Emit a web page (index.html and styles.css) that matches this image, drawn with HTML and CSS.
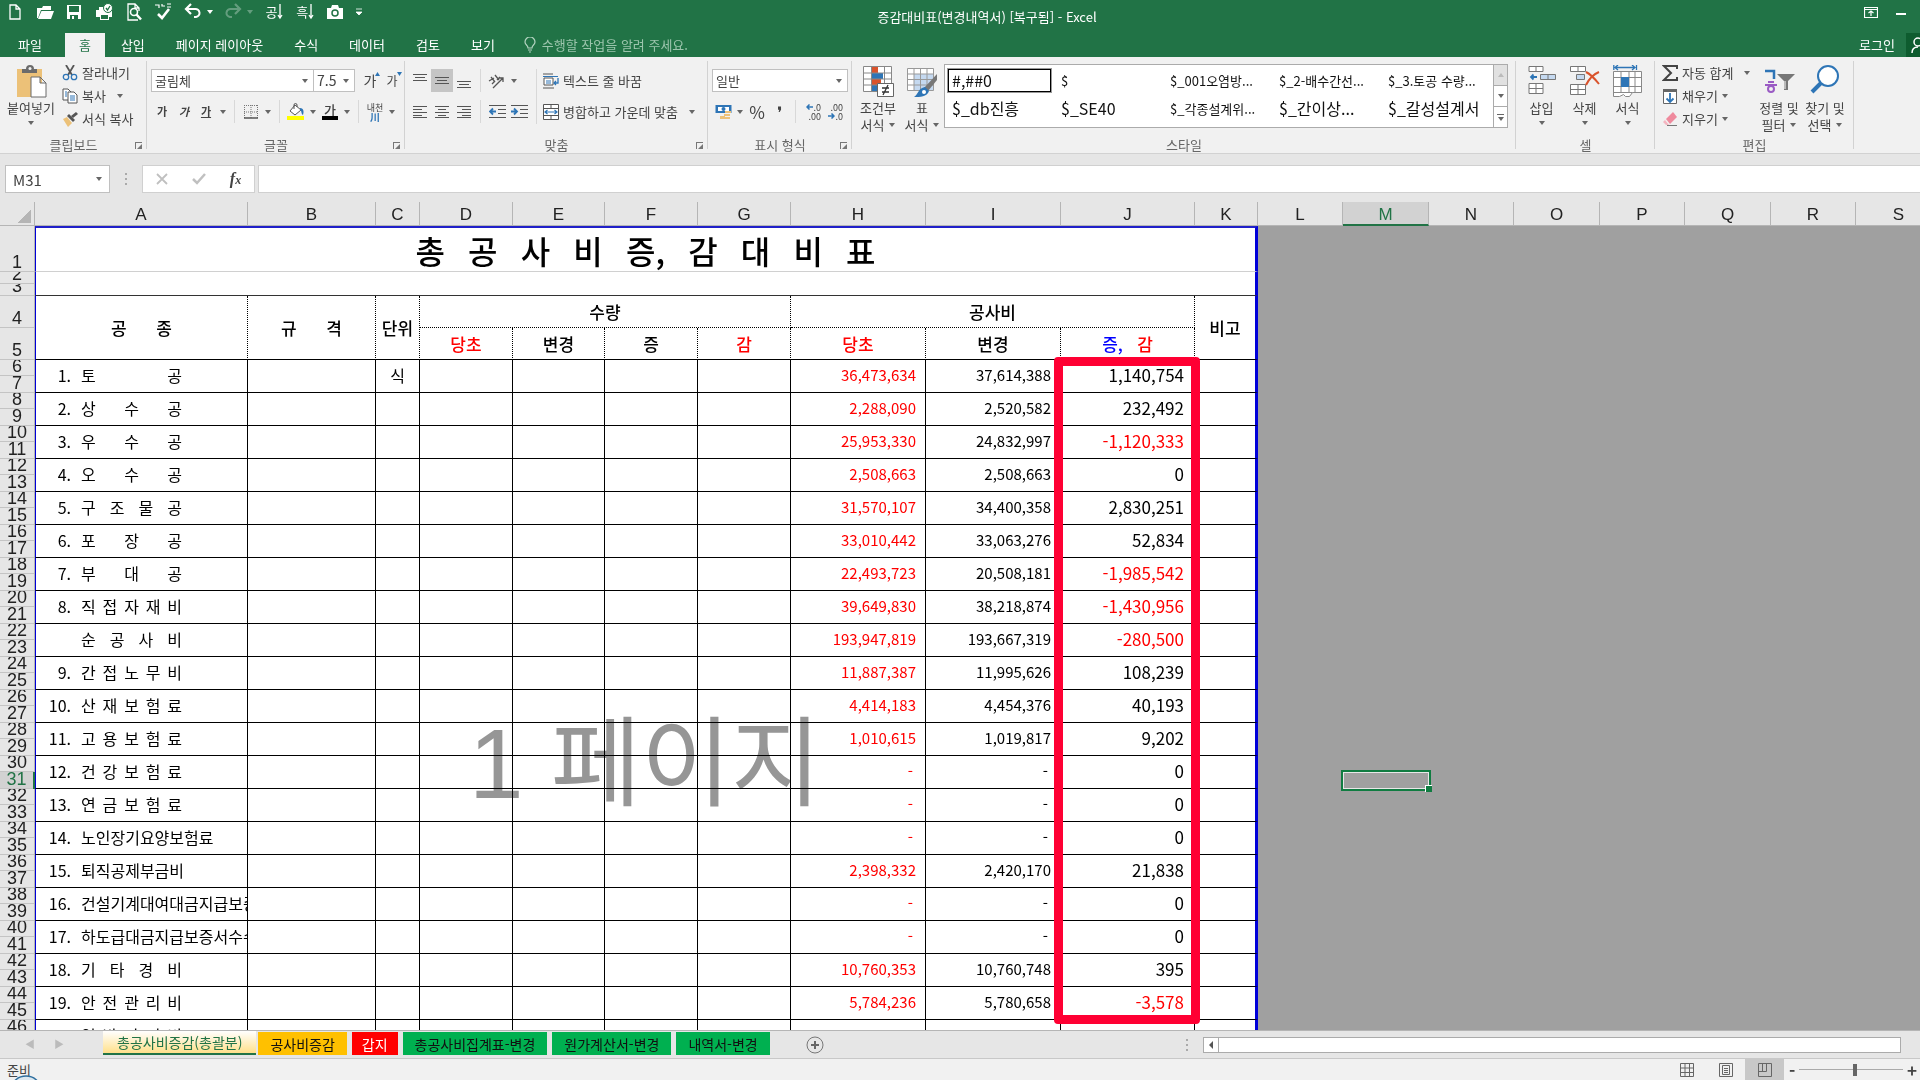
FILE: index.html
```html
<!DOCTYPE html>
<html lang="ko">
<head>
  <meta charset="UTF-8">
  <title>증감대비표(변경내역서) [복구됨] - Excel</title>
  <link rel="stylesheet" href="styles.css">
</head>
<body>

  <header class="titlebar">
    <div class="quick">
      <button aria-label="새로 만들기"><svg width="18" height="18" viewBox="0 0 18 18"><path d="M4 2h6l4 4v10H4zM10 2v4h4" fill="none" stroke="#fff" stroke-width="1.3"/></svg></button>
      <button aria-label="열기"><svg width="18" height="18" viewBox="0 0 18 18"><path d="M1 15V5h5l1-2h8v4H5l-3 8zM5.500 8H18l-3 8H2z" fill="#fff"/></svg></button>
      <button aria-label="저장"><svg width="18" height="18" viewBox="0 0 18 18"><path d="M2 2h14v14H2zM4 3v6h10V3zM5 12v4h2v-3h2v3h4v-4z" fill="#fff" fill-rule="evenodd"/></svg></button>
      <button aria-label="빠른 인쇄"><svg width="18" height="18" viewBox="0 0 18 18"><path d="M1 7h3V4h5v3h8v7h-3v3H5v-3H1zM6 12v4h7v-4z" fill="#fff" fill-rule="evenodd"/><circle cx="13" cy="5" r="4.500" fill="#fff" stroke="#217346"/><path d="M11 5l1.500 2L15 3" fill="none" stroke="#217346" stroke-width="1.300"/></svg></button>
      <button aria-label="인쇄 미리 보기"><svg width="18" height="18" viewBox="0 0 18 18"><path d="M13 17H3V1h7l4 4v3M10 1v4h4" fill="none" stroke="#fff" stroke-width="1.300"/><circle cx="9" cy="9" r="3.500" fill="none" stroke="#fff" stroke-width="1.600"/><path d="M11.500 11.500l4.500 5" stroke="#fff" stroke-width="2.500"/></svg></button>
      <button aria-label="맞춤법 검사"><svg width="18" height="18" viewBox="0 0 18 18"><path d="M4 11l4 4 7-9" fill="none" stroke="#fff" stroke-width="2.600"/><path d="M1 2h4v3M8 1v2h3M13 1h4M13 4h4" fill="none" stroke="#fff" stroke-width="1.200"/></svg></button>
      <button class="wide" aria-label="실행 취소"><svg width="18" height="18" viewBox="0 0 18 18"><path d="M3 6h8a4 4 0 0 1 1 8h-2" fill="none" stroke="#fff" stroke-width="2"/><path d="M7 1L2 6l5 5" fill="none" stroke="#fff" stroke-width="2.200"/></svg><i class="caret"></i></button>
      <button class="wide faded" aria-label="다시 실행"><svg width="18" height="18" viewBox="0 0 18 18"><path d="M15 6H7a4 4 0 0 0-1 8h2" fill="none" stroke="#fff" stroke-width="2"/><path d="M11 1l5 5-5 5" fill="none" stroke="#fff" stroke-width="2.200"/></svg><i class="caret"></i></button>
      <button class="sort">공<svg width="6" height="16" viewBox="0 0 6 16"><path d="M3 0v14M1 11l2 3 2-3" fill="none" stroke="#fff" stroke-width="1.300"/></svg></button>
      <button class="sort">흑<svg width="6" height="16" viewBox="0 0 6 16"><path d="M3 0v14M1 11l2 3 2-3" fill="none" stroke="#fff" stroke-width="1.300"/></svg></button>
      <button aria-label="카메라"><svg width="18" height="18" viewBox="0 0 18 18"><path d="M1 5h4l1-3h6l1 3h4v11H1z" fill="#fff"/><circle cx="9" cy="10" r="3" fill="none" stroke="#217346" stroke-width="1.500"/></svg></button>
      <button class="more" aria-label="빠른 실행 도구 모음 사용자 지정"><svg width="8" height="8" viewBox="0 0 8 8"><path d="M1 1h6M1 4h6L4 7z" fill="#fff" stroke="#fff" stroke-width="0.800"/></svg></button>
    </div>
    <h1 class="doc-title">증감대비표(변경내역서) [복구됨] - Excel</h1>
    <div class="window-buttons">
      <button aria-label="리본 메뉴 표시 옵션"><svg width="14" height="11" viewBox="0 0 14 11"><path d="M.5.5h13v10H.5zM.5 2.500h13M7 9V4M4.500 6L7 4l2.500 2" fill="none" stroke="#fff" stroke-width="1.200"/></svg></button>
      <button aria-label="최소화"><svg width="10" height="11" viewBox="0 0 10 11"><path d="M0 7h10" stroke="#fff" stroke-width="2"/></svg></button>
    </div>
  </header>

  <nav class="menu">
    <a class="file" href="#file">파일</a>
    <a class="on" href="#home">홈</a>
    <a href="#insert">삽입</a>
    <a href="#layout">페이지 레이아웃</a>
    <a href="#formula">수식</a>
    <a href="#data">데이터</a>
    <a href="#review">검토</a>
    <a href="#view">보기</a>
    <button class="tell-me"><svg width="12" height="16" viewBox="0 0 12 16"><path d="M4 11c0-3-3-3-3-6a5 5 0 0 1 10 0c0 3-3 3-3 6zM4 13h4M5 15h2" fill="none" stroke="#b4d4c1" stroke-width="1.200"/></svg>수행할 작업을 알려 주세요.</button>
    <button class="login">로그인</button>
    <button class="share" aria-label="공유"><svg width="14" height="18" viewBox="0 0 14 18"><circle cx="12" cy="6" r="4" fill="none" stroke="#fff" stroke-width="1.500"/><path d="M6 17c0-4 2-6 6-6" fill="none" stroke="#fff" stroke-width="1.500"/></svg></button>
  </nav>

  <section class="ribbon">
    <div class="group clipboard">
      <div class="group-body">
        <button class="big">
          <svg width="32" height="34" viewBox="0 0 32 34"><path d="M2 4h25v28H2z" fill="#ecc178"/><path d="M7 8V4h4a4 4 0 0 1 8 0h3v4z" fill="#6b6b6b"/><circle cx="15" cy="3.500" r="1.500" fill="#f1f1f1"/><path d="M16 12h9l6 6v14H16zM25 12v6h6" fill="#fff" stroke="#6b6b6b"/></svg>
          붙여넣기<i class="caret"></i>
        </button>
        <div class="stack">
          <button class="small"><svg width="16" height="16" viewBox="0 0 16 16"><path d="M4 0l6 10M12 0L6 10" stroke="#555" stroke-width="1.800"/><circle cx="4" cy="12" r="2.700" fill="none" stroke="#2e75b6" stroke-width="1.300"/><circle cx="12" cy="12" r="2.700" fill="none" stroke="#2e75b6" stroke-width="1.300"/></svg>잘라내기</button>
          <button class="small"><svg width="16" height="16" viewBox="0 0 16 16"><path d="M1 1h5l3 3v8H1z" fill="#fff" stroke="#555"/><path d="M6 4h6l3 3v8H6z" fill="#fff" stroke="#555"/><path d="M8 8h5M8 10h5M8 12h5M3 4h2M3 6h2M3 8h2" stroke="#2e75b6"/></svg>복사<i class="caret far"></i></button>
          <button class="small"><svg width="16" height="16" viewBox="0 0 16 16"><path d="M1 8l4-2 5 6-4 4z" fill="#ecc178"/><path d="M5 5l2-2 6 6-2 2z" fill="#555"/><path d="M9 5l5-4 2 2-5 4z" fill="#555"/></svg>서식 복사</button>
        </div>
      </div>
      <div class="group-name">클립보드<span class="launch"></span></div>
    </div>

    <div class="group font">
      <div class="group-body rows">
        <div class="row">
          <span class="pick wide-pick"><select aria-label="글꼴"><option>굴림체</option></select></span>
          <span class="pick size-pick"><select aria-label="글꼴 크기"><option>7.5</option></select></span>
          <button class="tool grow">가<svg width="5" height="4" viewBox="0 0 5 4"><path d="M0 4l2.500-4L5 4z" fill="#2e75b6"/></svg></button>
          <button class="tool shrink">가<svg width="5" height="4" viewBox="0 0 5 4"><path d="M0 0l2.500 4L5 0z" fill="#2e75b6"/></svg></button>
        </div>
        <div class="row tools">
          <button class="tool bold">가</button>
          <button class="tool italic">가</button>
          <button class="tool under">가</button>
          <button class="drop" aria-label="밑줄 옵션"><i class="caret"></i></button>
          <span class="bar"></span>
          <button class="tool" aria-label="테두리"><svg width="14" height="14" viewBox="0 0 14 14"><path d="M.5 0v13M13.500 0v13M7 0v13M0 .5h14M0 7h14" stroke="#777" stroke-dasharray="1 1"/><path d="M0 13h14" stroke="#555" stroke-width="1.500"/></svg></button>
          <button class="drop" aria-label="테두리 옵션"><i class="caret"></i></button>
          <span class="bar"></span>
          <button class="tool" aria-label="채우기 색"><svg width="18" height="17" viewBox="0 0 18 17"><path d="M8 2l6 5-6 5-5-4z" fill="#fff" stroke="#555"/><path d="M7 6V2a1.500 1.500 0 0 1 3 0v2" fill="none" stroke="#555"/><path d="M13 5c4 0 4 4 3 7-2-1-1-4-3-5z" fill="#2e75b6"/><path d="M0 13h17v4H0z" fill="#ff0"/></svg></button>
          <button class="drop" aria-label="채우기 색 옵션"><i class="caret"></i></button>
          <button class="tool color">가</button>
          <button class="drop" aria-label="글꼴 색 옵션"><i class="caret"></i></button>
          <span class="bar"></span>
          <button class="tool ruby">내천<b>川</b></button>
          <button class="drop" aria-label="윗주 옵션"><i class="caret"></i></button>
        </div>
      </div>
      <div class="group-name">글꼴<span class="launch"></span></div>
    </div>

    <div class="group align">
      <div class="group-body">
        <div class="rows">
          <div class="row tools">
            <button class="tool" aria-label="위쪽 맞춤"><svg width="14" height="16" viewBox="0 0 14 16"><path d="M0 1.500h14M2 4.500h10M0 7.500h14" stroke="#555"/></svg></button>
            <button class="tool on" aria-label="가운데 맞춤"><svg width="14" height="16" viewBox="0 0 14 16"><path d="M0 4.500h14M2 7.500h10M0 10.500h14" stroke="#555"/></svg></button>
            <button class="tool" aria-label="아래쪽 맞춤"><svg width="14" height="16" viewBox="0 0 14 16"><path d="M0 8.500h14M2 11.500h10M0 14.500h14" stroke="#555"/></svg></button>
            <span class="bar"></span>
            <button class="tool" aria-label="방향"><svg width="18" height="16" viewBox="0 0 18 16"><path d="M5 15L15 5M15 9V5h-4M1 8l5-3M3 4l4 5M7 2l4 5M9 7l3-3M4 11l3-3" fill="none" stroke="#555" stroke-width="1.300"/></svg></button>
            <button class="drop" aria-label="방향 옵션"><i class="caret"></i></button>
          </div>
          <div class="row tools">
            <button class="tool" aria-label="왼쪽 맞춤"><svg width="14" height="12" viewBox="0 0 14 12"><path d="M0 .5h14M0 3.500h9M0 6.500h14M0 9.500h9M0 11.500h14" stroke="#555"/></svg></button>
            <button class="tool" aria-label="가로 가운데 맞춤"><svg width="14" height="12" viewBox="0 0 14 12"><path d="M0 .5h14M3 3.500h8M0 6.500h14M3 9.500h8M0 11.500h14" stroke="#555"/></svg></button>
            <button class="tool" aria-label="오른쪽 맞춤"><svg width="14" height="12" viewBox="0 0 14 12"><path d="M0 .5h14M5 3.500h9M0 6.500h14M5 9.500h9M0 11.500h14" stroke="#555"/></svg></button>
            <span class="bar"></span>
            <button class="tool" aria-label="내어쓰기"><svg width="17" height="14" viewBox="0 0 17 14"><path d="M0 .5h17M9 4.500h8M9 8.500h8M0 12.500h17" stroke="#555"/><path d="M7 6.500H1M4 3.500l-3 3 3 3" fill="none" stroke="#2e75b6" stroke-width="1.800"/></svg></button>
            <button class="tool" aria-label="들여쓰기"><svg width="17" height="14" viewBox="0 0 17 14"><path d="M0 .5h17M9 4.500h8M9 8.500h8M0 12.500h17" stroke="#555"/><path d="M0 6.500h6M3 3.500l3 3-3 3" fill="none" stroke="#2e75b6" stroke-width="1.800"/></svg></button>
          </div>
        </div>
        <span class="bar tall"></span>
        <div class="rows">
          <button class="small"><svg width="16" height="16" viewBox="0 0 16 16"><path d="M0 1h10M0 15h11" stroke="#555"/><path d="M1 5h9v7H1z" fill="#fff" stroke="#555"/><path d="M0 3.500h15M3 8h5M3 10h5" stroke="#2e75b6" stroke-width="1.200"/><path d="M15 5v5h-4M13 8l-2 2 2 2" fill="none" stroke="#2e75b6" stroke-width="1.300"/></svg>텍스트 줄 바꿈</button>
          <button class="small"><svg width="16" height="16" viewBox="0 0 16 16"><path d="M.5.5h15v15H.5zM.5 4.500h15M.5 11.500h15M8 .5v4M8 11.500v4" fill="#fff" stroke="#555"/><path d="M2 8h12M4.500 6L2 8l2.500 2M11.500 6L14 8l-2.500 2" fill="none" stroke="#2e75b6" stroke-width="1.200"/></svg>병합하고 가운데 맞춤<i class="caret far"></i></button>
        </div>
      </div>
      <div class="group-name">맞춤<span class="launch"></span></div>
    </div>

    <div class="group number">
      <div class="group-body rows">
        <div class="row"><span class="pick format-pick"><select aria-label="표시 형식"><option>일반</option></select></span></div>
        <div class="row tools">
          <button class="tool" aria-label="회계 표시 형식"><svg width="17" height="16" viewBox="0 0 17 16"><path d="M.5 1h16v8H.5z" fill="#2e75b6"/><path d="M3 3h11v4H3z" fill="#fff"/><circle cx="8.500" cy="5" r="2" fill="#2e75b6"/><path d="M10 7h6v2h-6zM9 10h6v2H9zM5 12h5v3H5zM10 13h5v2h-5z" fill="#ecc178"/></svg></button>
          <button class="drop" aria-label="회계 옵션"><i class="caret"></i></button>
          <button class="tool percent">%</button>
          <button class="tool comma">❜</button>
          <span class="bar"></span>
          <button class="tool decimals"><span><svg width="7" height="6" viewBox="0 0 7 6"><path d="M7 3H1M3.500.5L1 3l2.500 2.500" fill="none" stroke="#2e75b6" stroke-width="1.500"/></svg>.0</span><span>.00</span></button>
          <button class="tool decimals"><span>.00</span><span><svg width="7" height="6" viewBox="0 0 7 6"><path d="M0 3h6M3.500.5L6 3 3.500 5.500" fill="none" stroke="#2e75b6" stroke-width="1.500"/></svg>.0</span></button>
        </div>
      </div>
      <div class="group-name">표시 형식<span class="launch"></span></div>
    </div>

    <div class="group styles">
      <div class="group-body">
        <button class="big">
          <svg width="32" height="34" viewBox="0 0 32 34"><path d="M1.500 1.500h28v25h-28z" fill="#fff"/><path d="M10 2h6v6h-6zM10 14h9v6h-9z" fill="#d9532c"/><path d="M10 8h11v6H10zM10 20h5v6h-5z" fill="#2e75b6"/><path d="M1.500 1.500h28v25h-28zM1.500 8h28M1.500 14h28M1.500 20h28M9.500 1.500v25M22.500 1.500v25" fill="none" stroke="#888"/><path d="M15.500 18.500h16v13h-16z" fill="#fff" stroke="#666"/><path d="M20 23h7M20 27h7M26 20l-5 10" stroke="#333" stroke-width="1.300"/></svg>
          조건부<span>서식<i class="caret"></i></span>
        </button>
        <button class="big">
          <svg width="32" height="34" viewBox="0 0 32 34"><path d="M1.500 3.500h26v22h-26z" fill="#fff"/><path d="M8 9h20v16H8z" fill="#c5d9f0"/><path d="M1.500 3.500h26v22h-26zM1.500 9h26M1.500 14.500h26M1.500 20h26M8 3.500v22M14.500 3.500v22M21 3.500v22" fill="none" stroke="#999"/><path d="M31 9v6L22 26l-4-3z" fill="#777"/><path d="M19 22l4 4c-2 6-9 6-15 6 4-2 4-9 11-10z" fill="#2e75b6"/><circle cx="18" cy="27" r="2" fill="#fff"/></svg>
          표<span>서식<i class="caret"></i></span>
        </button>
        <div class="gallery">
          <div class="gallery-items">
            <button class="picked tall-text">#,##0</button>
            <button>$</button>
            <button>$_001오염방...</button>
            <button>$_2-배수간선...</button>
            <button>$_3.토공 수량...</button>
            <button class="tall-text">$_db진흥</button>
            <button class="tall-text">$_SE40</button>
            <button>$_각종설계위...</button>
            <button class="tall-text">$_간이상...</button>
            <button class="tall-text">$_갈성설계서</button>
          </div>
          <div class="gallery-scroll">
            <button aria-label="위로" disabled><i class="caret up"></i></button>
            <button aria-label="아래로"><i class="caret"></i></button>
            <button class="expand" aria-label="자세히"><i class="caret"></i></button>
          </div>
        </div>
      </div>
      <div class="group-name">스타일</div>
    </div>

    <div class="group cells">
      <div class="group-body">
        <button class="big">
          <svg width="30" height="34" viewBox="0 0 30 34"><path d="M2 1.500h14v5H2zM9 1.500v5M2 18.500h14v10H2zM9 18.500v10M2 23.500h14" fill="#fff" stroke="#777"/><path d="M13.500 9.500h15v5h-15zM21 9.500v5" fill="#c5d9f0" stroke="#777"/><path d="M10 12H4M6.500 9.500L4 12l2.500 2.500" fill="none" stroke="#2e75b6" stroke-width="1.800"/></svg>
          삽입<i class="caret"></i>
        </button>
        <button class="big">
          <svg width="30" height="34" viewBox="0 0 30 34"><path d="M.5 1.500h15v5H.5zM8 1.500v5M.5 19.500h15v10H.5zM8 19.500v10M.5 24.500h15" fill="#fff" stroke="#777"/><path d="M6.500 9.500h8v5h-8z" fill="#c5d9f0" stroke="#777"/><path d="M16 7c4 2 9 7 13 12M29 7c-5 2-10 7-13 13" fill="none" stroke="#d9532c" stroke-width="2"/></svg>
          삭제<i class="caret"></i>
        </button>
        <button class="big">
          <svg width="30" height="34" viewBox="0 0 30 34"><path d="M.8 0v5M23.500 0v5M2 2.500h20M5 0L2 2.500 5 5M19 0l3 2.500L19 5" fill="none" stroke="#2e75b6" stroke-width="1.300"/><path d="M.5 6.500h28v21h-9l-3 4h-4l-2-2-4 2h-6zM.5 12.500h28M.5 21.500h28M.5 27.500h19M8 6.500v21M16 6.500v21M22 6.500v21" fill="#fff" stroke="#888"/><path d="M8 12h8v10H8z" fill="#2e75b6"/></svg>
          서식<i class="caret"></i>
        </button>
      </div>
      <div class="group-name">셀</div>
    </div>

    <div class="group edit">
      <div class="group-body">
        <div class="stack">
          <button class="small"><svg width="16" height="16" viewBox="0 0 16 16"><path d="M15 4V1H2l7 7-7 7h13v-3" fill="none" stroke="#444" stroke-width="2"/></svg>자동 합계<i class="caret far"></i></button>
          <button class="small"><svg width="16" height="16" viewBox="0 0 16 16"><path d="M1.500 1.500h13v14h-13z" fill="#fff" stroke="#666"/><path d="M1 1h14v3H1z" fill="#666"/><path d="M8 5v9M4.500 10.500L8 14l3.500-3.500" fill="none" stroke="#2e75b6" stroke-width="1.800"/></svg>채우기<i class="caret"></i></button>
          <button class="small"><svg width="16" height="16" viewBox="0 0 16 16"><path d="M4 8l7-7 4 5-7 7z" fill="#ef8a9d"/><path d="M3 9l4 5H4l-3-3z" fill="#f4b5c0"/><path d="M5 14.500h10" stroke="#777"/></svg>지우기<i class="caret"></i></button>
        </div>
        <button class="big">
          <svg width="32" height="34" viewBox="0 0 32 34"><path d="M2 6h9v8" fill="none" stroke="#2e75b6" stroke-width="2.500"/><path d="M5 17h6M2 20h12" stroke="#9a5bc4" stroke-width="2"/><circle cx="8" cy="24" r="3" fill="none" stroke="#9a5bc4" stroke-width="2"/><path d="M14 9h18l-7 7v9h-4v-9z" fill="#777"/><path d="M22 16v8" stroke="#fff"/></svg>
          정렬 및<span>필터<i class="caret"></i></span>
        </button>
        <button class="big">
          <svg width="32" height="34" viewBox="0 0 32 34"><circle cx="19" cy="11" r="10" fill="#fff" stroke="#2e75b6" stroke-width="2"/><path d="M12 18L3 27" stroke="#2e75b6" stroke-width="4"/></svg>
          찾기 및<span>선택<i class="caret"></i></span>
        </button>
      </div>
      <div class="group-name">편집</div>
    </div>
  </section>

  <section class="formula-bar">
    <span class="pick name-pick"><input type="text" aria-label="이름 상자" value="M31"></span>
    <span class="dots"></span>
    <div class="fx">
      <button aria-label="취소"><svg width="12" height="12" viewBox="0 0 12 12"><path d="M1 1l10 10M11 1L1 11" stroke="#c0c0c0" stroke-width="1.800"/></svg></button>
      <button aria-label="입력"><svg width="14" height="12" viewBox="0 0 14 12"><path d="M1 6l4 4 8-9" fill="none" stroke="#c0c0c0" stroke-width="2.500"/></svg></button>
      <button class="fx-sign">f<small>x</small></button>
    </div>
    <input class="formula" type="text" aria-label="수식 입력줄">
  </section>

  <main class="sheet">
    <table>
      <colgroup id="cols"></colgroup>
      <thead><tr id="letters"></tr></thead>
      <tbody id="cellsBody"></tbody>
    </table>
    <div class="page-mark">1 페이지</div>
    <div class="red-frame"></div>
  </main>

  <footer>
    <div class="sheet-tabs">
      <div class="tab-nav"><button aria-label="이전 시트">◀</button><button aria-label="다음 시트">▶</button></div>
      <button class="tab current">총공사비증감(총괄분)</button>
      <button class="tab orange">공사비증감</button>
      <button class="tab red">갑지</button>
      <button class="tab green">총공사비집계표-변경</button>
      <button class="tab green">원가계산서-변경</button>
      <button class="tab green">내역서-변경</button>
      <button class="add" aria-label="새 시트"><svg width="18" height="18" viewBox="0 0 18 18"><circle cx="9" cy="9" r="8" fill="none" stroke="#777"/><path d="M9 5v8M5 9h8" stroke="#666" stroke-width="2"/></svg></button>
      <span class="dots"></span>
      <div class="hscroll"><button aria-label="왼쪽으로"><svg width="6" height="8" viewBox="0 0 6 8"><path d="M5 0v8L1 4z" fill="#555"/></svg></button><div class="thumb"></div></div>
    </div>
    <div class="status">
      <span class="ready">준비</span>
      <svg class="orb" width="26" height="5" viewBox="0 0 26 5"><ellipse cx="13" cy="13" rx="14" ry="12" fill="#dce8f0" stroke="#2f6f9f" stroke-width="1.500"/></svg>
      <div class="views">
        <button aria-label="기본"><svg width="14" height="14" viewBox="0 0 14 14"><path d="M.5.5h13v13H.5zM.5 5h13M.5 9.500h13M5 .5v13M9.500.5v13" fill="none" stroke="#666"/></svg></button>
        <button aria-label="페이지 레이아웃"><svg width="14" height="14" viewBox="0 0 14 14"><path d="M.5.5h13v13H.5zM3.500 2.500h7v9h-7zM5 5.500h4M5 7.500h4M5 9.500h4" fill="none" stroke="#666"/></svg></button>
        <button class="on" aria-label="페이지 나누기 미리 보기"><svg width="14" height="14" viewBox="0 0 14 14"><path d="M.5.5h13v13H.5zM.5 8.500h8v-8M4.500.5v8" fill="none" stroke="#666"/></svg></button>
      </div>
      <div class="zoom"><button aria-label="축소">-</button><input type="range" min="0" max="100" value="54" aria-label="확대/축소"><button aria-label="확대">+</button></div>
    </div>
  </footer>

  <script>
    const letters = 'ABCDEFGHIJKLMNOPQRS'.split('');
    const widths = [213, 128, 44, 93, 92, 93, 93, 135, 135, 134, 63, 85, 86, 85, 86, 85, 86, 85, 86];

    // 번호, 공종, 당초, 변경, 증감
    const items = [
      ['1.', '토 공', '36,473,634', '37,614,388', '1,140,754'],
      ['2.', '상 수 공', '2,288,090', '2,520,582', '232,492'],
      ['3.', '우 수 공', '25,953,330', '24,832,997', '-1,120,333'],
      ['4.', '오 수 공', '2,508,663', '2,508,663', '0'],
      ['5.', '구 조 물 공', '31,570,107', '34,400,358', '2,830,251'],
      ['6.', '포 장 공', '33,010,442', '33,063,276', '52,834'],
      ['7.', '부 대 공', '22,493,723', '20,508,181', '-1,985,542'],
      ['8.', '직 접 자 재 비', '39,649,830', '38,218,874', '-1,430,956'],
      ['', '순 공 사 비', '193,947,819', '193,667,319', '-280,500'],
      ['9.', '간 접 노 무 비', '11,887,387', '11,995,626', '108,239'],
      ['10.', '산 재 보 험 료', '4,414,183', '4,454,376', '40,193'],
      ['11.', '고 용 보 험 료', '1,010,615', '1,019,817', '9,202'],
      ['12.', '건 강 보 험 료', '-', '-', '0'],
      ['13.', '연 금 보 험 료', '-', '-', '0'],
      ['14.', '노인장기요양보험료', '-', '-', '0'],
      ['15.', '퇴직공제부금비', '2,398,332', '2,420,170', '21,838'],
      ['16.', '건설기계대여대금지급보증서', '-', '-', '0'],
      ['17.', '하도급대금지급보증서수수료', '-', '-', '0'],
      ['18.', '기 타 경 비', '10,760,353', '10,760,748', '395'],
      ['19.', '안 전 관 리 비', '5,784,236', '5,780,658', '-3,578'],
      ['', '일 반 관 리 비', '', '', '']
    ];

    document.getElementById('cols').innerHTML =
      '<col class="col-head">' + widths.map(w => `<col style="width:${w}px">`).join('');

    document.getElementById('letters').innerHTML = '<th class="corner"></th>' +
      letters.map(l => `<th class="letter${l === 'M' ? ' active' : ''}">${l}</th>`).join('');

    function rowHead(n, size) {
      return `<th class="row-head ${size}${n === 31 ? ' active' : ''}"><div>${n}</div></th>`;
    }

    let html = `
      <tr>${rowHead(1, 'h-title')}<td class="title" colspan="11"><div>총 공 사 비 증, 감 대 비 표</div></td></tr>
      <tr>${rowHead(2, 'h-thin')}<td class="blank" colspan="11"></td></tr>
      <tr>${rowHead(3, 'h-thin')}<td class="blank last" colspan="11"></td></tr>
      <tr class="heads">${rowHead(4, 'h-head')}
        <td rowspan="2" class="first solid"><div class="pair">공 종</div></td>
        <td rowspan="2" class="solid"><div class="pair">규 격</div></td>
        <td rowspan="2" class="solid">단위</td>
        <td colspan="4">수량</td>
        <td colspan="3">공사비</td>
        <td rowspan="2" class="solid edge">비고</td>
      </tr>
      <tr class="heads">${rowHead(5, 'h-head')}
        <td class="solid minus">당초</td><td class="solid">변경</td><td class="solid">증</td><td class="solid minus">감</td>
        <td class="solid minus">당초</td><td class="solid">변경</td>
        <td class="solid"><span class="plus">증,</span>&nbsp;&nbsp; <span class="minus">감</span></td>
      </tr>`;

    items.forEach((item, i) => {
      const [no, name, before, after, diff] = item;
      const n = 6 + i * 2;
      const spread = name.includes(' ') ? 'spread' : '';
      html += `
      <tr class="item">${rowHead(n, 'h-even')}
        <td rowspan="2" class="first"><div class="work"><span class="no">${no}</span><span class="${spread}">${name}</span></div></td>
        <td rowspan="2"></td>
        <td rowspan="2" class="unit">${i === 0 ? '식' : ''}</td>
        <td rowspan="2"></td><td rowspan="2"></td><td rowspan="2"></td><td rowspan="2"></td>
        <td rowspan="2" class="num minus${before === '-' ? ' dash' : ''}">${before}</td>
        <td rowspan="2" class="num${after === '-' ? ' dash' : ''}">${after}</td>
        <td rowspan="2" class="num diff${diff[0] === '-' ? ' minus' : ''}">${diff}</td>
        <td rowspan="2" class="edge"></td>
      </tr>
      <tr>${rowHead(n + 1, 'h-odd')}${n + 1 === 31 ? '<td class="off"></td><td class="off selected"></td>' : ''}</tr>`;
    });

    document.getElementById('cellsBody').innerHTML = html;
  </script>
</body>
</html>
```

FILE: styles.css
```css
* { box-sizing: border-box; }

body {
  margin: 0;
  height: 100vh;
  display: flex;
  flex-direction: column;
  overflow: hidden;
  font-family: 'Noto Sans CJK KR', sans-serif;
  font-size: 13px;
  line-height: 17px;
  color: #444;
  background: #e6e6e6;
}

button, select, input {
  font: inherit;
  color: inherit;
  background: none;
  border: 0;
  padding: 0;
  margin: 0;
}

svg { flex: none; }

.caret {
  flex: none;
  border-left: 3px solid transparent;
  border-right: 3px solid transparent;
  border-top: 4px solid #666;
}

.caret.up {
  border-top: 0;
  border-bottom: 4px solid #bbb;
}

/* title bar */
.titlebar {
  display: grid;
  grid-template-columns: 368px 1fr 314px;
  height: 33px;
  background: #217346;
  color: #fff;
}

.quick {
  display: flex;
  height: 23px;
}

.quick button {
  width: 30px;
  display: flex;
  align-items: center;
  justify-content: center;
}

.quick .wide {
  width: 41px;
  gap: 5px;
}

.quick .sort { width: 31px; }
.quick .more { width: 18px; }
.quick .faded { opacity: 0.3; }
.quick .caret { border-top-color: #fff; }

.doc-title {
  margin: 0;
  padding-top: 8px;
  font-size: 13px;
  font-weight: 400;
  line-height: 17px;
  text-align: center;
}

.window-buttons {
  display: flex;
  justify-content: flex-end;
  gap: 18px;
  height: 24px;
  padding-right: 14px;
}

.window-buttons button {
  display: flex;
  align-items: center;
}

.menu {
  display: flex;
  height: 24px;
  line-height: 24px;
  background: #217346;
  color: #fff;
}

.menu a {
  padding: 0 15px 0 16px;
  color: #fff;
  text-decoration: none;
}

.menu .file { padding: 0 23px 0 18px; }

.menu .on {
  padding: 0 14px;
  background: #f1f1f1;
  color: #217346;
}

.tell-me {
  display: flex;
  align-items: center;
  gap: 6px;
  margin-left: 14px;
  color: #9cc5ad;
}

.login {
  margin-left: auto;
  padding-right: 11px;
}

.share {
  display: flex;
  align-items: center;
  background: #0e5c2f;
}

/* ribbon */
.ribbon {
  display: flex;
  height: 97px;
  padding-top: 4px;
  background: #f1f1f1;
  border-bottom: 1px solid #d2d2d2;
}

.group {
  position: relative;
  display: flex;
  flex-direction: column;
}

.group::after {
  content: '';
  position: absolute;
  top: 0;
  right: 0;
  bottom: 4px;
  width: 1px;
  background: #d2d2d2;
}

.group-body {
  flex: 1;
  display: flex;
}

.group-name {
  position: relative;
  height: 17px;
  text-align: center;
  color: #666;
}

.launch {
  position: absolute;
  right: 5px;
  top: 6px;
  width: 7px;
  height: 7px;
  border-left: 1px solid #777;
  border-top: 1px solid #777;
}

.launch::after {
  content: '';
  position: absolute;
  right: 0;
  bottom: 0;
  border-left: 5px solid transparent;
  border-bottom: 5px solid #777;
}

.clipboard { width: 147px; }
.font { width: 258px; }
.align { width: 303px; }
.number { width: 144px; }
.styles { flex: 0 1 663px; }
.cells { width: 139px; }
.edit { width: 199px; }

.big {
  width: 44px;
  padding-top: 4px;
  display: flex;
  flex-direction: column;
  align-items: center;
  white-space: nowrap;
}

.big > .caret { margin-top: 5px; }

.big span {
  display: flex;
  align-items: center;
  gap: 5px;
}

.small {
  height: 24px;
  display: flex;
  align-items: center;
  gap: 4px;
  white-space: nowrap;
}

.far { margin-left: 7px; }

.clipboard .big { width: 62px; }
.clipboard .small { height: 23px; }

.rows {
  display: flex;
  flex-direction: column;
  gap: 8px;
  padding-top: 8px;
}

.row {
  display: flex;
  height: 23px;
}

.font .row { padding-left: 4px; }
.align .group-body { padding-left: 4px; }
.number .row { padding-left: 4px; }
.styles .group-body { padding-left: 4px; }
.cells .group-body { padding-left: 4px; }
.cells .big { width: 43px; }
.edit .group-body { padding-left: 7px; }
.edit .stack { width: 94px; }
.edit .big { width: 46px; }
.edit .small { height: 23px; }
.align .rows .small { height: 23px; }

.tool {
  position: relative;
  width: 22px;
  height: 23px;
  display: flex;
  align-items: center;
  justify-content: center;
}

.tool.on { background: #c5c5c5; }

.drop {
  width: 12px;
  display: flex;
  align-items: center;
  justify-content: center;
}

.bar {
  width: 1px;
  margin: 0 5px;
  background: #d8d8d8;
}

.bar.tall { margin: 8px 6px 12px; }

.grow {
  margin-left: 4px;
  font-size: 14px;
}

.shrink { font-size: 12px; }

.grow svg, .shrink svg {
  position: absolute;
  right: 1px;
  top: 3px;
}

.bold, .italic, .under {
  font-size: 11px;
  font-weight: 700;
}

.italic { font-style: italic; }
.under { text-decoration: underline; }

.color {
  font-weight: 500;
  line-height: 14px;
  padding-bottom: 4px;
}

.color::after {
  content: '';
  position: absolute;
  left: 3px;
  right: 3px;
  bottom: 3px;
  height: 4px;
  background: #000;
}

.ruby {
  flex-direction: column;
  font-size: 9px;
  line-height: 9px;
  white-space: nowrap;
}

.ruby b {
  color: #2e75b6;
  font-size: 10px;
}

.percent { font-size: 17px; }
.comma { font-size: 17px; }

.decimals {
  flex-direction: column;
  align-items: flex-end;
  padding-right: 2px;
  font-size: 9px;
  line-height: 9px;
}

.decimals span {
  display: flex;
  align-items: center;
}

.pick {
  position: relative;
  display: flex;
  background: #fff;
  border: 1px solid #c0c0c0;
}

.pick::after {
  content: '';
  position: absolute;
  right: 5px;
  top: 9px;
  border-left: 3px solid transparent;
  border-right: 3px solid transparent;
  border-top: 4px solid #666;
  pointer-events: none;
}

.pick select, .pick input {
  appearance: none;
  width: 100%;
  padding-left: 3px;
}

.wide-pick { width: 163px; }
.size-pick { width: 41px; border-left: 0; }
.size-pick select { font-size: 14px; }
.format-pick { width: 136px; }

.gallery {
  flex: 1;
  display: flex;
  height: 64px;
  margin: 3px 8px 0 0;
  background: #fff;
  border: 1px solid #ababab;
}

.gallery-items {
  flex: 1;
  display: grid;
  grid-template-columns: repeat(5, 109px);
  grid-template-rows: 23px 23px;
  row-gap: 5px;
  padding: 4px 0 0 3px;
  overflow: hidden;
}

.gallery-items button {
  width: 103px;
  padding-left: 4px;
  color: #111;
  text-align: left;
  white-space: nowrap;
}

.gallery-items .picked {
  padding-left: 3px;
  border: 1px solid #000;
  outline: 1px solid #999;
}

.gallery-items .tall-text { font-size: 16px; }

.gallery-scroll {
  width: 14px;
  display: flex;
  flex-direction: column;
  border-left: 1px solid #ababab;
}

.gallery-scroll button {
  flex: 1;
  display: flex;
  align-items: center;
  justify-content: center;
  border-bottom: 1px solid #ababab;
}

.gallery-scroll button:disabled { background: #e1e1e1; }

.gallery-scroll .expand {
  flex-direction: column;
  gap: 2px;
  border-bottom: 0;
}

.expand::before {
  content: '';
  width: 7px;
  height: 1px;
  background: #666;
}

/* formula bar */
.formula-bar {
  display: flex;
  padding: 11px 0 9px 5px;
  height: 48px;
}

.name-pick {
  width: 105px;
  font-size: 15px;
}

.name-pick input { padding-left: 7px; }
.name-pick::after { top: 11px; right: 7px; }

.dots {
  width: 2px;
  height: 12px;
  margin: 8px 15px;
  background: repeating-linear-gradient(#aaa 0 2px, transparent 2px 5px);
}

.fx {
  width: 113px;
  margin-right: 3px;
  display: flex;
  background: #fff;
  border: 1px solid #d0d0d0;
}

.fx button { flex: 1; }

.fx-sign {
  font-family: 'Liberation Serif', serif;
  font-style: italic;
  font-weight: 700;
  font-size: 16px;
}

.fx-sign small { font-size: 12px; }

.formula {
  flex: 1;
  padding: 0 8px;
  background: #fff;
  border: 1px solid #d0d0d0;
  border-right: 0;
}

/* sheet */
.sheet {
  position: relative;
  flex: 1;
  min-height: 0;
  overflow: hidden;
  background: #a0a0a0;
}

.sheet table {
  table-layout: fixed;
  width: 0;
  border-collapse: separate;
  border-spacing: 0;
  color: #000;
}

.col-head { width: 35px; }

.sheet th, .sheet td {
  padding: 0;
  overflow: hidden;
}

.corner, .letter {
  height: 24px;
  background: #e6e6e6;
  border-right: 1px solid #b5b5b5;
  border-bottom: 1px solid #b5b5b5;
}

.corner::after {
  content: '';
  display: block;
  width: 14px;
  height: 14px;
  margin: 4px 0 0 17px;
  background: linear-gradient(135deg, transparent 50%, #b5b5b5 50%);
}

.sheet .letter {
  padding-top: 3px;
  font: 400 17px/20px 'Liberation Sans', sans-serif;
  color: #222;
}

.sheet .letter.active {
  line-height: 19px;
  background: #d2d2d2;
  border-bottom: 2px solid #217346;
  color: #217346;
}

.row-head {
  background: #e6e6e6;
  border-right: 1px solid #b5b5b5;
}

.row-head div {
  display: flex;
  align-items: flex-end;
  justify-content: center;
  overflow: hidden;
  border-bottom: 1px solid #c4c4c4;
  font: 400 18px/18px 'Liberation Sans', sans-serif;
  color: #222;
}

.row-head.active { background: #d2d2d2; border-right: 2px solid #217346; }
.row-head.active div { color: #217346; }

.h-title div { height: 46px; }
.h-thin div { height: 12px; }
.h-head div { height: 32px; }
.h-even div { height: 16px; }
.h-odd div { height: 17px; }

.sheet td {
  background: #fff;
  border-right: 1px solid #000;
  border-bottom: 1px solid #000;
}

.sheet .title, .sheet .blank, .sheet .first { border-left: 1px solid #0000d8; }
.sheet .title, .sheet .blank, .sheet .edge { border-right: 3px solid #0000d8; }
.sheet .title { border-top: 2px solid #2020c8; border-bottom-color: #d0d0d0; }
.sheet .blank { border-bottom: 0; }
.sheet .last { border-bottom: 1px solid #333; }

.title div {
  width: 460px;
  margin: 0 auto;
  font-size: 32px;
  font-weight: 500;
  line-height: 40px;
  text-align-last: justify;
}

.heads td {
  font-size: 17px;
  font-weight: 500;
  line-height: 20px;
  text-align: center;
  border-right-style: dotted;
  border-bottom-style: dotted;
}

.heads .solid { border-bottom-style: solid; }
.heads .edge { border-right-style: solid; }

.pair {
  width: 61px;
  margin: 0 auto;
  text-align-last: justify;
}

.item td {
  font-size: 16px;
  line-height: 20px;
  padding-bottom: 2px;
  white-space: nowrap;
}

.work { display: flex; }

.no {
  flex: none;
  width: 45px;
  padding-right: 10px;
  text-align: right;
}

.spread {
  width: 101px;
  text-align-last: justify;
}

.item .unit { text-align: center; }

.item .num {
  padding-right: 9px;
  text-align: right;
  font-size: 15px;
}

.item .dash { padding-right: 12px; }

.item .diff {
  padding-right: 10px;
  font-size: 17px;
}

.sheet .minus { color: #f00; }
.sheet .plus { color: #00f; }

.sheet .off {
  background: none;
  border: 0;
}

.sheet .selected {
  position: relative;
  overflow: visible;
}

.selected::before {
  content: '';
  position: absolute;
  inset: -2px;
  border: 2px solid #107c41;
  box-shadow: inset 0 0 0 1px #e8e8e8;
}

.selected::after {
  content: '';
  position: absolute;
  right: -3px;
  bottom: -3px;
  width: 6px;
  height: 6px;
  background: #107c41;
  border-left: 1px solid #fff;
  border-top: 1px solid #fff;
}

.page-mark {
  position: absolute;
  left: 469px;
  top: 492px;
  font-family: 'Liberation Sans', 'Noto Sans CJK KR', sans-serif;
  font-size: 98px;
  line-height: 140px;
  color: #969696;
  mix-blend-mode: darken;
}

.red-frame {
  position: absolute;
  left: 1054px;
  top: 155px;
  width: 146px;
  height: 667px;
  border: 9px solid #ff0033;
  border-radius: 4px;
}

/* sheet tabs */
.sheet-tabs {
  display: flex;
  align-items: flex-start;
  gap: 5px;
  height: 29px;
  border-top: 1px solid #b5b5b5;
  border-bottom: 1px solid #c8c8c8;
}

.tab-nav {
  display: flex;
  width: 98px;
  padding: 4px 0 0 25px;
  gap: 19px;
  font-size: 10px;
  color: #bbb;
}

.tab {
  height: 23px;
  margin-top: 1px;
  padding: 0 12px;
  font-size: 14px;
  line-height: 20px;
  color: #111;
  white-space: nowrap;
}

.tab.current {
  height: 24px;
  margin: 0 -3px 0 0;
  padding: 0 14px;
  color: #217346;
  background: linear-gradient(#fff, #ffe08a);
  border-bottom: 2px solid #217346;
}

.tab.orange { background: #ffc000; }
.tab.red { padding: 0 10px; background: #f00; color: #fff; }
.tab.green { background: #00b050; }

.add {
  height: 27px;
  margin-left: 31px;
  display: flex;
  align-items: center;
}

.sheet-tabs .dots { margin: 8px 10px 0 auto; }

.hscroll {
  flex: 0 0 698px;
  height: 16px;
  margin: 6px 19px 0 0;
  display: flex;
}

.hscroll button {
  width: 16px;
  display: flex;
  align-items: center;
  justify-content: center;
  background: #fff;
  border: 1px solid #ababab;
}

.thumb {
  flex: 1;
  background: #fff;
  border: 1px solid #ababab;
  border-left: 0;
}

/* status bar */
.status {
  position: relative;
  display: flex;
  height: 21px;
  background: #f1f1f1;
}

.ready { padding: 2px 0 0 7px; }

.orb {
  position: absolute;
  left: 13px;
  bottom: 0;
}

.views {
  display: flex;
  margin-left: auto;
}

.views button {
  width: 39px;
  display: flex;
  align-items: center;
  justify-content: center;
}

.views .on { background: #c8c8c8; }

.zoom {
  display: flex;
  align-items: center;
  width: 136px;
  padding: 0 3px 0 5px;
  font-size: 17px;
  font-weight: 700;
}

.zoom input {
  appearance: none;
  flex: 1;
  min-width: 0;
  height: 1px;
  margin: 0 4px;
  background: #aaa;
}

.zoom input::-webkit-slider-thumb {
  appearance: none;
  width: 4px;
  height: 12px;
  background: #666;
}
```
